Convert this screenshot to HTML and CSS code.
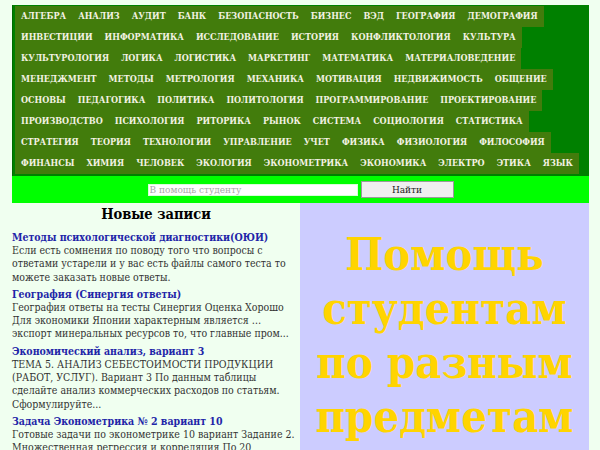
FILE: index.html
```html
<!DOCTYPE html>
<html lang="ru">
<head>
<meta charset="utf-8">
<title>В помощь студенту</title>
<link rel="stylesheet" href="styles.css">
</head>
<body>
<div class="page">
  <nav class="menu">
    <div class="row"><a href="#">АЛГЕБРА</a><a href="#">АНАЛИЗ</a><a href="#">АУДИТ</a><a href="#">БАНК</a><a href="#">БЕЗОПАСНОСТЬ</a><a href="#">БИЗНЕС</a><a href="#">ВЭД</a><a href="#">ГЕОГРАФИЯ</a><a href="#">ДЕМОГРАФИЯ</a></div>
    <div class="row"><a href="#">ИНВЕСТИЦИИ</a><a href="#">ИНФОРМАТИКА</a><a href="#">ИССЛЕДОВАНИЕ</a><a href="#">ИСТОРИЯ</a><a href="#">КОНФЛИКТОЛОГИЯ</a><a href="#">КУЛЬТУРА</a></div>
    <div class="row"><a href="#">КУЛЬТУРОЛОГИЯ</a><a href="#">ЛОГИКА</a><a href="#">ЛОГИСТИКА</a><a href="#">МАРКЕТИНГ</a><a href="#">МАТЕМАТИКА</a><a href="#">МАТЕРИАЛОВЕДЕНИЕ</a></div>
    <div class="row"><a href="#">МЕНЕДЖМЕНТ</a><a href="#">МЕТОДЫ</a><a href="#">МЕТРОЛОГИЯ</a><a href="#">МЕХАНИКА</a><a href="#">МОТИВАЦИЯ</a><a href="#">НЕДВИЖИМОСТЬ</a><a href="#">ОБЩЕНИЕ</a></div>
    <div class="row"><a href="#">ОСНОВЫ</a><a href="#">ПЕДАГОГИКА</a><a href="#">ПОЛИТИКА</a><a href="#">ПОЛИТОЛОГИЯ</a><a href="#">ПРОГРАММИРОВАНИЕ</a><a href="#">ПРОЕКТИРОВАНИЕ</a></div>
    <div class="row"><a href="#">ПРОИЗВОДСТВО</a><a href="#">ПСИХОЛОГИЯ</a><a href="#">РИТОРИКА</a><a href="#">РЫНОК</a><a href="#">СИСТЕМА</a><a href="#">СОЦИОЛОГИЯ</a><a href="#">СТАТИСТИКА</a></div>
    <div class="row"><a href="#">СТРАТЕГИЯ</a><a href="#">ТЕОРИЯ</a><a href="#">ТЕХНОЛОГИИ</a><a href="#">УПРАВЛЕНИЕ</a><a href="#">УЧЕТ</a><a href="#">ФИЗИКА</a><a href="#">ФИЗИОЛОГИЯ</a><a href="#">ФИЛОСОФИЯ</a></div>
    <div class="row"><a href="#">ФИНАНСЫ</a><a href="#">ХИМИЯ</a><a href="#">ЧЕЛОВЕК</a><a href="#">ЭКОЛОГИЯ</a><a href="#">ЭКОНОМЕТРИКА</a><a href="#">ЭКОНОМИКА</a><a href="#">ЭЛЕКТРО</a><a href="#">ЭТИКА</a><a href="#">ЯЗЫК</a></div>
  </nav>
  <form class="search">
    <input class="search-input" type="text" placeholder="В помощь студенту">
    <button class="search-btn" type="button">Найти</button>
  </form>
  <div class="main">
    <section class="news">
      <h2 class="news-title">Новые записи</h2>
      <article class="entry">
        <a class="entry-link" href="#">Методы психологической диагностики(ОЮИ)</a>
        <p class="entry-text">Если есть сомнения по поводу того что вопросы с ответами устарели и у вас есть файлы самого теста то можете заказать новые ответы.</p>
      </article>
      <article class="entry">
        <a class="entry-link" href="#">География (Синергия ответы)</a>
        <p class="entry-text">География ответы на тесты Синергия Оценка Хорошо Для экономики Японии характерным является … экспорт минеральных ресурсов то, что главные пром...</p>
      </article>
      <article class="entry">
        <a class="entry-link" href="#">Экономический анализ, вариант 3</a>
        <p class="entry-text">ТЕМА 5. АНАЛИЗ СЕБЕСТОИМОСТИ ПРОДУКЦИИ (РАБОТ, УСЛУГ). Вариант 3 По данным таблицы сделайте анализ коммерческих расходов по статьям. Сформулируйте...</p>
      </article>
      <article class="entry">
        <a class="entry-link" href="#">Задача Эконометрика № 2 вариант 10</a>
        <p class="entry-text">Готовые задачи по эконометрике 10 вариант Задание 2. Множественная регрессия и корреляция По 20 предприятиям региона изучается зависимость выработки...</p>
      </article>
    </section>
    <aside class="promo">
      <p class="promo-text">Помощь студентам по разным предметам</p>
    </aside>
  </div>
</div>
</body>
</html>
```

FILE: styles.css
```css
html, body {
  margin: 0;
  padding: 0;
  background: #f0fff0;
  font-family: "DejaVu Serif Condensed", "DejaVu Serif", serif;
  font-stretch: semi-condensed;
}

.page {
  width: 577px;
  margin: 5px 0 0 12px;
}

.menu {
  display: flex;
  flex-direction: column;
  align-items: flex-start;
  background: #008000;
  border-left: 1px solid #006a00;
  padding: 1px 4px 2px 2px;
}

.row {
  display: flex;
  background: #427c0c;
}

.row a {
  display: block;
  color: #f2f2e2;
  text-decoration: none;
  font-weight: bold;
  font-size: 9px;
  line-height: 21px;
  height: 21px;
  padding: 0 6px;
  white-space: nowrap;
}

.search {
  display: flex;
  justify-content: center;
  align-items: center;
  gap: 3px;
  margin: 0;
  height: 27px;
  background: #00ff00;
}

.search-input {
  width: 206px;
  height: 10px;
  padding: 0 1px;
  border: 1px solid #d8ffd8;
  background: #fff;
  font-family: "DejaVu Serif Condensed", "DejaVu Serif", serif;
  font-size: 10px;
  color: #333;
}

.search-input::placeholder {
  color: #a8a8a8;
}

.search-btn {
  width: 93px;
  height: 17px;
  padding: 0;
  border: 1px solid #9a9a9a;
  background: #efefef;
  font-family: "DejaVu Serif Condensed", "DejaVu Serif", serif;
  font-size: 10px;
  color: #222;
}

.main {
  display: flex;
}

.news {
  width: 288px;
  flex: none;
}

.news-title {
  margin: 2px 0 9px;
  text-align: center;
  font-size: 14.5px;
  line-height: 17px;
  color: #000;
}

.entry {
  margin-bottom: 4px;
}

.entry-link {
  display: block;
  font-weight: bold;
  font-size: 10.5px;
  line-height: 13px;
  color: #1f26a8;
  text-decoration: none;
}

.entry-text {
  margin: 0;
  font-size: 10.5px;
  line-height: 13.3px;
  color: #333;
}

.promo {
  flex: 1;
  background: #ccccff;
  min-height: 260px;
}

.promo-text {
  margin: 25px 0 0;
  text-align: center;
  font-weight: bold;
  font-size: 45px;
  line-height: 54px;
  color: #ffd400;
}
```
